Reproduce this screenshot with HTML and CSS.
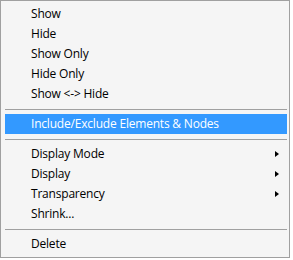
FILE: index.html
```html
<!DOCTYPE html>
<html lang="en">
<head>
    <meta charset="UTF-8">
    <title>Context Menu</title>
    <link rel="stylesheet" href="styles.css">
</head>
<body>
    <ul class="menu">
        <li class="item">Show</li>
        <li class="item">Hide</li>
        <li class="item">Show Only</li>
        <li class="item">Hide Only</li>
        <li class="item">Show &lt;-&gt; Hide</li>
        <li class="sep"></li>
        <li class="item active">Include/Exclude Elements &amp; Nodes</li>
        <li class="sep"></li>
        <li class="item sub">Display Mode</li>
        <li class="item sub">Display</li>
        <li class="item sub">Transparency</li>
        <li class="item">Shrink...</li>
        <li class="sep"></li>
        <li class="item">Delete</li>
    </ul>
</body>
</html>
```

FILE: styles.css
```css
body {
    margin: 0;
    background-color: #ffffff;
    font-family: "Open Sans", "Liberation Sans", sans-serif;
    font-size: 12px;
}
.menu {
    list-style: none;
    margin: 0;
    width: 282px;
    padding: 3px 2px 3px 4px;
    background-color: #f5f5f5;
    border: 1px solid #a0a0a0;
    display: flex;
    flex-direction: column;
}
.item {
    height: 20px;
    line-height: 20px;
    padding-left: 26px;
    color: #000000;
    letter-spacing: -0.2px;
    display: flex;
    justify-content: space-between;
    align-items: center;
    white-space: nowrap;
}
.item.active {
    background-color: #3399ff;
    color: #ffffff;
}
.item.sub::after {
    content: "";
    border-left: 4px solid #000000;
    border-top: 3.5px solid transparent;
    border-bottom: 3.5px solid transparent;
    margin-right: 8px;
}
.sep {
    height: 10px;
    display: flex;
    flex-direction: column;
    justify-content: center;
}
.sep::before {
    content: "";
    display: block;
    height: 1px;
    margin-top: 1px;
    background-color: #a0a0a0;
}
```
